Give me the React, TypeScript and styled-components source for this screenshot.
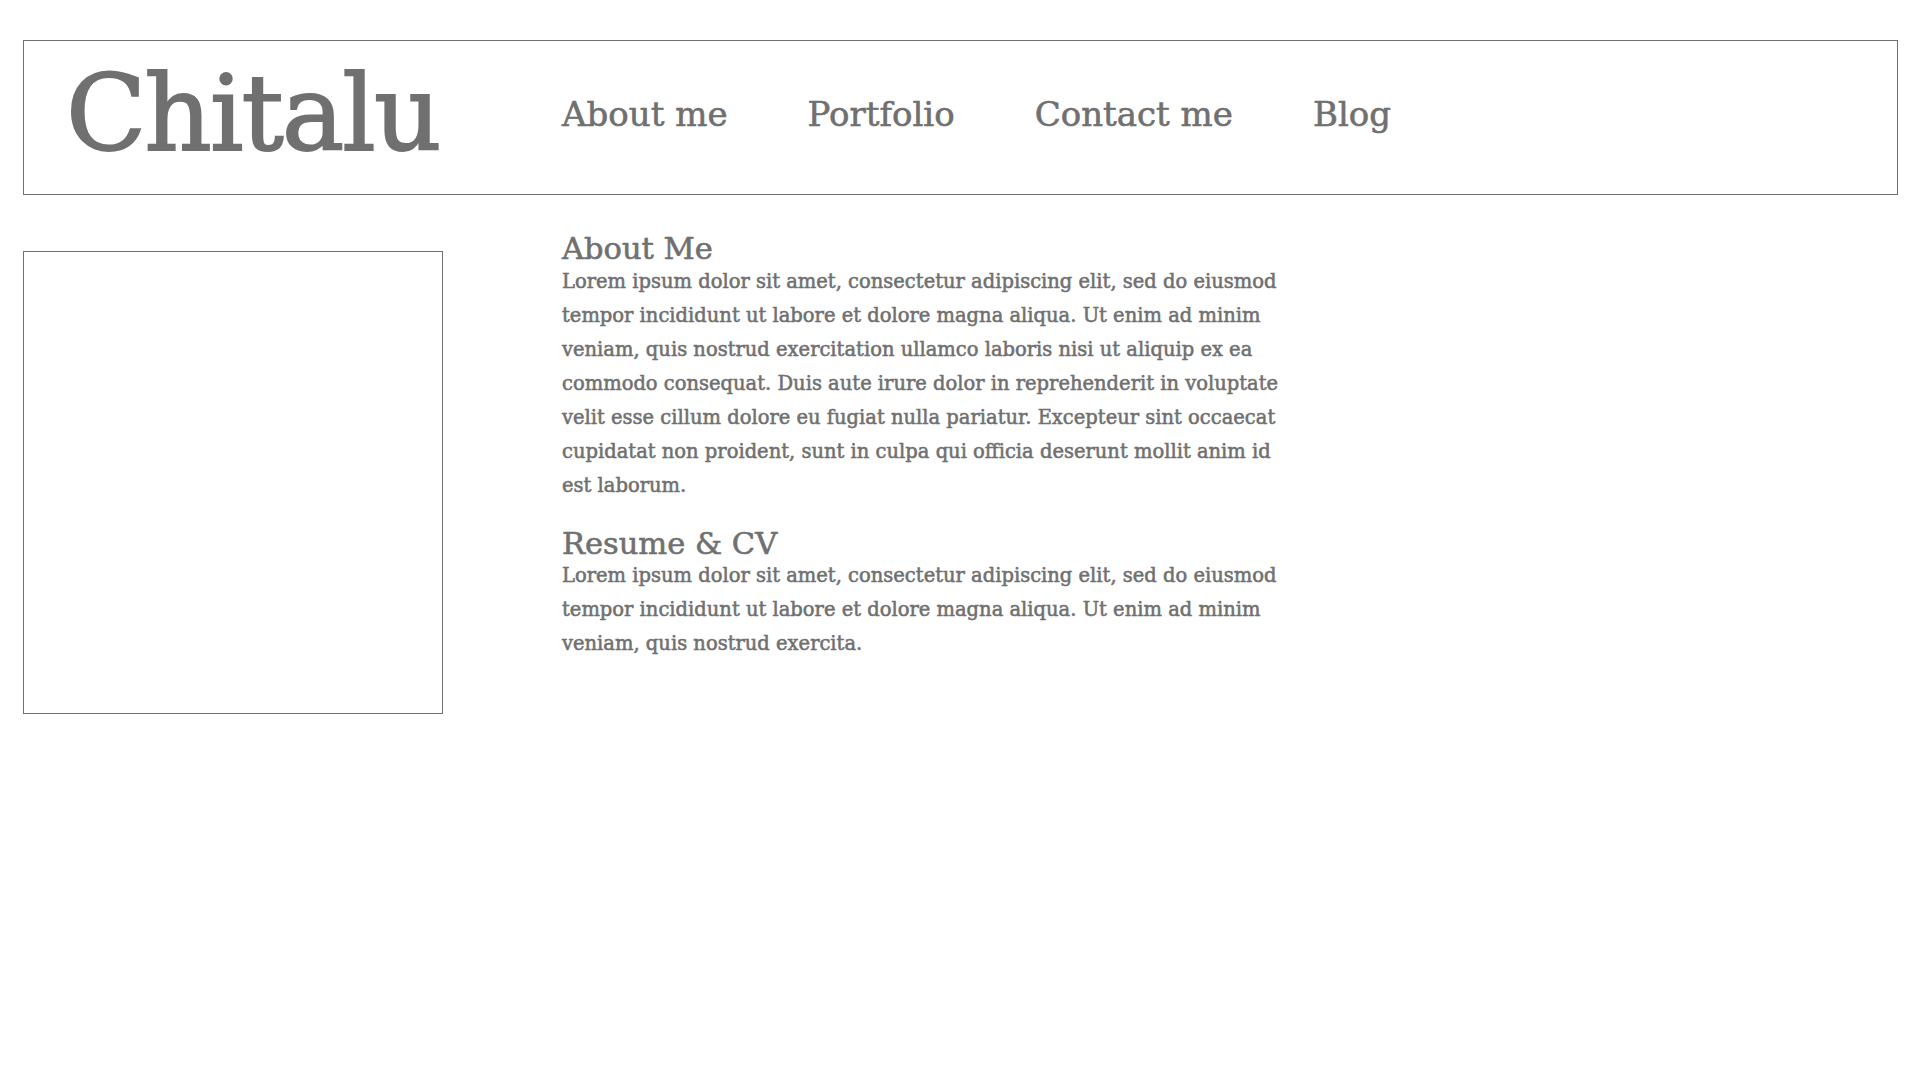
import React from "react";
import styled, { createGlobalStyle } from "styled-components";

const GlobalStyle = createGlobalStyle`
  html, body {
    margin: 0;
    padding: 0;
    background: #ffffff;
  }
  body {
    font-family: "DejaVu Serif", "Liberation Serif", serif;
    color: #707070;
  }
`;

const Page = styled.div`
  padding: 40px 22px 0 23px;
`;

const Header = styled.header`
  box-sizing: border-box;
  height: 155px;
  border: 1px solid #707070;
  display: grid;
  grid-template-columns: 538px 1fr;
  align-items: center;
`;

const Logo = styled.h1`
  margin: 0;
  padding: 0 0 6px 42px;
  font-family: "DejaVu Serif", serif;
  font-weight: 400;
  font-size: 105px;
  letter-spacing: -2px;
  line-height: 1;
  color: #707070;
  -webkit-text-stroke: 1.8px #707070;
`;

const Nav = styled.nav`
  display: flex;
  gap: 80px;
  padding-bottom: 7px;
`;

const NavLink = styled.a`
  font-family: "DejaVu Serif", serif;
  font-size: 34px;
  color: #707070;
  text-decoration: none;
  -webkit-text-stroke: 0.6px #707070;
`;

const Main = styled.main`
  margin-top: 39px;
  display: grid;
  grid-template-columns: 539px 730px;
  align-items: start;
`;

const Photo = styled.div`
  box-sizing: border-box;
  margin-top: 17px;
  width: 420px;
  height: 463px;
  border: 1px solid #707070;
`;

const Content = styled.div`
  display: flex;
  flex-direction: column;
  gap: 26px;
`;

const Section = styled.section`
  display: flex;
  flex-direction: column;
`;

const Heading = styled.h2`
  margin: 0;
  font-family: "DejaVu Serif", serif;
  font-weight: 400;
  font-size: 30.5px;
  line-height: 1;
  color: #707070;
  -webkit-text-stroke: 0.6px #707070;
`;

const Body = styled.p`
  margin: 0;
  font-family: "DejaVu Serif", serif;
  font-size: 19.5px;
  line-height: 34px;
  color: #707070;
  -webkit-text-stroke: 0.55px #707070;
`;

const navItems = ["About me", "Portfolio", "Contact me", "Blog"];

export default function App() {
  return (
    <>
      <GlobalStyle />
      <Page>
        <Header>
          <Logo>Chitalu</Logo>
          <Nav>
            {navItems.map((item) => (
              <NavLink key={item} href="#">
                {item}
              </NavLink>
            ))}
          </Nav>
        </Header>
        <Main>
          <Photo />
          <Content>
            <Section>
              <Heading>About Me</Heading>
              <Body>
                Lorem ipsum dolor sit amet, consectetur adipiscing elit, sed do
                eiusmod tempor incididunt ut labore et dolore magna aliqua. Ut
                enim ad minim veniam, quis nostrud exercitation ullamco laboris
                nisi ut aliquip ex ea commodo consequat. Duis aute irure dolor
                in reprehenderit in voluptate velit esse cillum dolore eu fugiat
                nulla pariatur. Excepteur sint occaecat cupidatat non proident,
                sunt in culpa qui officia deserunt mollit anim id est laborum.
              </Body>
            </Section>
            <Section>
              <Heading>Resume &amp; CV</Heading>
              <Body>
                Lorem ipsum dolor sit amet, consectetur adipiscing elit, sed do
                eiusmod tempor incididunt ut labore et dolore magna aliqua. Ut
                enim ad minim veniam, quis nostrud exercita.
              </Body>
            </Section>
          </Content>
        </Main>
      </Page>
    </>
  );
}
